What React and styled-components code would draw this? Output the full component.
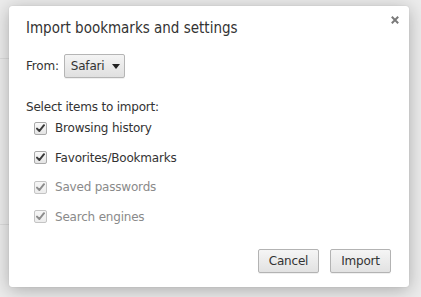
import React from "react";
import styled, { createGlobalStyle } from "styled-components";

const Global = createGlobalStyle`
  html, body { margin: 0; padding: 0; }
  body {
    background: #ececec;
    font-family: "DejaVu Sans", "Liberation Sans", sans-serif;
    width: 421px;
    height: 297px;
    overflow: hidden;
  }
`;

const Page = styled.div`
  position: relative;
  width: 421px;
  height: 297px;
  padding: 6px 0 0 9px;
  box-sizing: border-box;
`;

const Backdrop = styled.div`
  position: absolute;
  left: 0;
  top: 0;
  width: 9px;
  height: 297px;
  display: flex;
  flex-direction: column;
`;

const BackLine = styled.div`
  height: 1px;
  background: #dcdcdc;
  margin-top: ${(p) => p.$top}px;
`;

const Dialog = styled.div`
  position: relative;
  width: 400px;
  height: 281px;
  background: #fff;
  border-radius: 3px;
  box-shadow: 0 3px 18px rgba(0, 0, 0, 0.28), 0 0 1px rgba(0, 0, 0, 0.2);
  box-sizing: border-box;
  padding: 13px 17px 0 17px;
  display: flex;
  flex-direction: column;
  color: #333;
`;

const Title = styled.h1`
  margin: 0;
  font-family: "DejaVu Sans Condensed", "DejaVu Sans", sans-serif;
  font-stretch: condensed;
  font-size: 15px;
  font-weight: normal;
  line-height: 18px;
  color: #333;
`;

const Close = styled.button`
  position: absolute;
  right: 10px;
  top: 10px;
  width: 8px;
  height: 8px;
  border: 0;
  background: transparent;
  padding: 0;
  display: flex;
  align-items: center;
  justify-content: center;
`;

const Body = styled.div`
  font-size: 12px;
  line-height: 16px;
  letter-spacing: -0.2px;
  display: flex;
  flex-direction: column;
`;

const FromRow = styled.div`
  display: flex;
  align-items: center;
  gap: 5px;
  margin-top: 17px;
`;

const Select = styled.div`
  height: 24px;
  box-sizing: border-box;
  border: 1px solid #b5b5b5;
  border-radius: 2px;
  background: linear-gradient(#f4f4f4, #e0e0e0);
  box-shadow: 0 1px 0 rgba(0, 0, 0, 0.06);
  display: flex;
  align-items: center;
  padding: 0 0 0 6px;
  gap: 8px;
  width: 61px;
  color: #333;
`;

const SectionLabel = styled.div`
  margin-top: 21px;
`;

const Items = styled.div`
  display: flex;
  flex-direction: column;
  gap: 13.5px;
  margin-top: 5px;
  padding-left: 8px;
`;

const Item = styled.label`
  display: flex;
  align-items: center;
  gap: 8px;
  color: ${(p) => (p.$disabled ? "#8a8a8a" : "#333")};
  height: 16px;
`;

const Box = styled.span`
  width: 13px;
  height: 13px;
  box-sizing: border-box;
  border: 1px solid ${(p) => (p.$disabled ? "#c4c4c4" : "#a9a9a9")};
  border-radius: 2px;
  background: ${(p) =>
    p.$disabled ? "linear-gradient(#f6f6f6, #ececec)" : "linear-gradient(#fafafa, #e4e4e4)"};
  display: flex;
  align-items: center;
  justify-content: center;
`;

const Footer = styled.div`
  margin-top: auto;
  margin-bottom: 14px;
  display: flex;
  justify-content: flex-end;
  gap: 11px;
  margin-right: 1px;
`;

const Button = styled.button`
  width: 61px;
  height: 24px;
  box-sizing: border-box;
  border: 1px solid #b3b3b3;
  border-radius: 2px;
  background: linear-gradient(#f5f5f5, #e2e2e2);
  box-shadow: 0 1px 0 rgba(0, 0, 0, 0.06);
  font-family: "DejaVu Sans", "Liberation Sans", sans-serif;
  font-size: 12px;
  letter-spacing: -0.2px;
  color: #333;
  padding: 0;
`;

const Check = ({ disabled }) => (
  <Box $disabled={disabled}>
    <svg width="9" height="9" viewBox="0 0 9 9">
      <path
        d="M1 4.6 L3.4 7 L8 1.2"
        fill="none"
        stroke={disabled ? "#8c8c8c" : "#3a3a3a"}
        strokeWidth="2"
        strokeLinecap="round"
        strokeLinejoin="round"
      />
    </svg>
  </Box>
);

const items = [
  { label: "Browsing history", disabled: false },
  { label: "Favorites/Bookmarks", disabled: false },
  { label: "Saved passwords", disabled: true },
  { label: "Search engines", disabled: true },
];

export default function App() {
  return (
    <>
      <Global />
      <Page>
        <Backdrop>
          <BackLine $top={58} />
          <BackLine $top={165} />
        </Backdrop>
        <Dialog>
          <Title>Import bookmarks and settings</Title>
          <Close aria-label="Close">
            <svg width="8" height="8" viewBox="0 0 8 8">
              <path d="M0.8 0.8 L7.2 7.2 M7.2 0.8 L0.8 7.2" stroke="#7a7a7a" strokeWidth="2" />
            </svg>
          </Close>
          <Body>
            <FromRow>
              <span>From:</span>
              <Select>
                <span>Safari</span>
                <svg width="8" height="5" viewBox="0 0 8 5">
                  <path d="M0 0 H8 L4 5 Z" fill="#222" />
                </svg>
              </Select>
            </FromRow>
            <SectionLabel>Select items to import:</SectionLabel>
            <Items>
              {items.map((it) => (
                <Item key={it.label} $disabled={it.disabled}>
                  <Check disabled={it.disabled} />
                  <span>{it.label}</span>
                </Item>
              ))}
            </Items>
          </Body>
          <Footer>
            <Button>Cancel</Button>
            <Button>Import</Button>
          </Footer>
        </Dialog>
      </Page>
    </>
  );
}
